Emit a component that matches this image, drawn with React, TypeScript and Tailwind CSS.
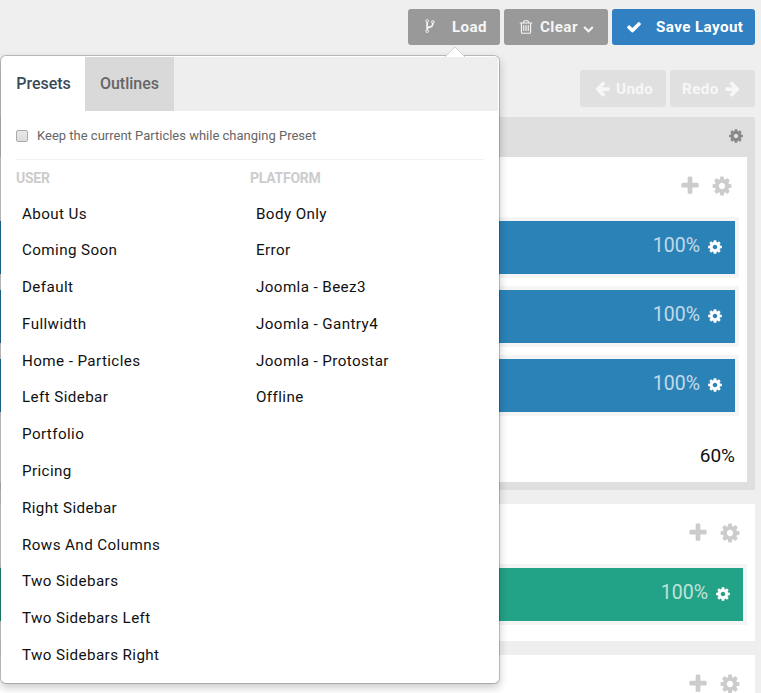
import type { ReactNode } from "react";

const ICONS = {
  cog: "M1152 896q0-106-75-181t-181-75-181 75-75 181 75 181 181 75 181-75 75-181zm512-109v222q0 12-8 23t-20 13l-185 28q-19 54-39 91 35 50 107 138 10 12 10 25t-9 23q-27 37-99 108t-94 71q-12 0-26-9l-138-108q-44 23-91 38-16 136-29 186-7 28-36 28h-222q-14 0-24.5-8.5t-11.5-21.5l-28-184q-49-16-90-37l-141 107q-10 9-25 9-14 0-25-11-126-114-165-168-7-10-7-23 0-12 8-23 15-21 51-66.5t54-70.5q-27-50-41-99l-183-27q-13-2-21-12.5t-8-23.5v-222q0-12 8-23t19-13l186-28q14-46 39-92-40-57-107-138-10-12-10-24 0-10 9-23 26-36 98.5-107.5t94.5-71.5q13 0 26 10l138 107q44-23 91-38 16-136 29-186 7-28 36-28h222q14 0 24.5 8.5t11.5 21.5l28 184q49 16 90 37l142-107q9-9 24-9 13 0 25 10 129 119 165 170 7 8 7 22 0 12-8 23-15 21-51 66.5t-54 70.5q26 50 41 98l183 28q13 2 21 12.5t8 23.5z",
  plus: "M1600 736v192q0 40-28 68t-68 28h-416v416q0 40-28 68t-68 28h-192q-40 0-68-28t-28-68v-416h-416q-40 0-68-28t-28-68v-192q0-40 28-68t68-28h416v-416q0-40 28-68t68-28h192q40 0 68 28t28 68v416h416q40 0 68 28t28 68z",
  check: "M1671 566q0 40-28 68l-724 724-136 136q-28 28-68 28t-68-28l-136-136-362-362q-28-28-28-68t28-68l136-136q28-28 68-28t68 28l294 295 656-657q28-28 68-28t68 28l136 136q28 28 28 68z",
  arrow: "M1664 896v128q0 53-32.5 90.5t-84.5 37.5h-704l293 294q38 36 38 90t-38 90l-75 76q-37 37-90 37-52 0-91-37l-651-652q-37-37-37-90 0-52 37-91l651-650q38-38 91-38 52 0 90 38l75 74q38 38 38 91t-38 91l-293 293h704q52 0 84.5 37.5t32.5 90.5z",
  trash: "M704 736v576q0 14-9 23t-23 9h-64q-14 0-23-9t-9-23v-576q0-14 9-23t23-9h64q14 0 23 9t9 23zm256 0v576q0 14-9 23t-23 9h-64q-14 0-23-9t-9-23v-576q0-14 9-23t23-9h64q14 0 23 9t9 23zm256 0v576q0 14-9 23t-23 9h-64q-14 0-23-9t-9-23v-576q0-14 9-23t23-9h64q14 0 23 9t9 23zm128 724v-948h-896v948q0 22 7 40.5t14.5 27 10.5 8.5h832q3 0 10.5-8.5t14.5-27 7-40.5zm-672-1076h448l-48-117q-7-9-17-11h-317q-10 2-17 11zm928 32v64q0 14-9 23t-23 9h-96v948q0 83-47 143.5t-113 60.5h-832q-66 0-113-58.5t-47-141.5v-952h-96q-14 0-23-9t-9-23v-64q0-14 9-23t23-9h309l70-167q15-37 54-63t79-26h320q40 0 79 26t54 63l70 167h309q14 0 23 9t9 23z",
  fork: "M672 1472q0-40-28-68t-68-28-68 28-28 68 28 68 68 28 68-28 28-68zm0-1152q0-40-28-68t-68-28-68 28-28 68 28 68 68 28 68-28 28-68zm640 128q0-40-28-68t-68-28-68 28-28 68 28 68 68 28 68-28 28-68zm96 0q0 52-26 96.5t-70 69.5q-2 287-226 414-67 38-203 81-128 40-169.5 71t-41.5 100v26q44 25 70 69.5t26 96.5q0 80-56 136t-136 56-136-56-56-136q0-52 26-96.5t70-69.5v-820q-44-25-70-69.5t-26-96.5q0-80 56-136t136-56 136 56 56 136q0 52-26 96.5t-70 69.5v497q54-26 154-57 55-17 87.5-29.5t70.5-31 59-39.5 40.5-51 28-69.5 8.5-91.5q-44-25-70-69.5t-26-96.5q0-80 56-136t136-56 136 56 56 136z",
  chevron: "M1683 808l-742 741q-19 19-45 19t-45-19l-742-741q-19-19-19-45.5t19-45.5l166-165q19-19 45-19t45 19l531 531 531-531q19-19 45-19t45 19l166 165q19 19 19 45.5t-19 45.5z",
};

function Icon({ name, className }: { name: keyof typeof ICONS; className: string }) {
  return (
    <svg viewBox="0 0 1792 1792" fill="currentColor" className={`shrink-0 ${className}`}>
      <path d={ICONS[name]} />
    </svg>
  );
}

const userPresets = [
  "About Us", "Coming Soon", "Default", "Fullwidth", "Home - Particles", "Left Sidebar", "Portfolio",
  "Pricing", "Right Sidebar", "Rows And Columns", "Two Sidebars", "Two Sidebars Left", "Two Sidebars Right",
];
const platformPresets = ["Body Only", "Error", "Joomla - Beez3", "Joomla - Gantry4", "Joomla - Protostar", "Offline"];

function SectionTools() {
  return (
    <div className="flex h-[60px] items-center justify-end gap-[10px] pr-[14px] pb-[2px] text-[#cccccc]">
      <Icon name="plus" className="size-[22px]" />
      <Icon name="cog" className="size-[22px]" />
    </div>
  );
}

function Block({ color }: { color: string }) {
  return (
    <div className="mr-2 border-4 border-l-0 border-[#f5f5f5]">
      <div className={`flex h-[53px] items-start justify-end pr-3 text-white ${color}`}>
        <span className="mt-[11px] text-[19.5px] leading-[28px] opacity-70">100%</span>
        <Icon name="cog" className="mt-[18px] ml-[7px] size-4" />
      </div>
    </div>
  );
}

function PresetList({ title, items }: { title: string; items: string[] }) {
  return (
    <div className="w-[234px]">
      <h2 className="h-[34.65px] pt-[8px] text-[14px] leading-[20px] font-bold tracking-[-0.25px] text-[#cccccc]">{title}</h2>
      <ul className="pl-[6px]">
        {items.map((item) => (
          <li key={item} className="h-[36.77px] text-[15.2px] leading-[38.4px] tracking-[0.4px] text-[#111111]">{item}</li>
        ))}
      </ul>
    </div>
  );
}

function Button({ className, children }: { className: string; children: ReactNode }) {
  return <button className={`flex items-center rounded-[3px] text-[15.2px] font-bold tracking-[0.4px] whitespace-nowrap ${className}`}>{children}</button>;
}

export default function App() {
  return (
    <div className="relative h-[693px] w-[761px] overflow-hidden bg-[#efefef] pr-[6px] font-[Roboto,sans-serif]">
      <div className="flex justify-end gap-1 pt-[9px]">
        <Button className="h-9 w-[92px] bg-[#999999] pl-[14px] text-[#f5f5f5]">
          <Icon name="fork" className="mr-[14px] mb-[2px] size-4" />Load
        </Button>
        <Button className="h-9 w-[104px] bg-[#999999] pl-[14px] text-[#f5f5f5]">
          <Icon name="trash" className="mr-[6px] mb-px size-4" />Clear
          <Icon name="chevron" className="mt-[2px] ml-[5px] size-[11px]" />
        </Button>
        <Button className="h-9 w-[143px] bg-[#3180c2] pl-[14px] text-white">
          <Icon name="check" className="mr-[14px] mb-px size-4" />Save Layout
        </Button>
      </div>

      <div className="mt-[25px] flex justify-end gap-1">
        <Button className="h-[37px] w-[86px] bg-[#e0e0e0] pt-px pl-[14px] text-[#f7f7f7]">
          <Icon name="arrow" className="mr-[5px] mb-px size-[17px]" />Undo
        </Button>
        <Button className="h-[37px] w-[85px] bg-[#e0e0e0] pt-px pl-3 text-[#f7f7f7]">
          Redo<Icon name="arrow" className="mb-px ml-[5px] size-[17px] -scale-x-100" />
        </Button>
      </div>

      <section className="mt-[10px] h-[373px] bg-[#dfdfdf] pr-2">
        <header className="flex h-10 items-center justify-end pr-[3px] pb-[2px] text-[#888888]">
          <Icon name="cog" className="size-4" />
        </header>
        <div className="h-[325px] bg-white">
          <SectionTools />
          <div className="flex flex-col gap-2">
            <Block color="bg-[#2a82b7]" />
            <Block color="bg-[#2a82b7]" />
            <Block color="bg-[#2a82b7]" />
          </div>
          <div className="mt-[26px] pr-3 text-right text-[19px] leading-[28px] text-[#111111]">60%</div>
        </div>
      </section>

      <section className="mt-[14px] h-[137px] bg-white">
        <SectionTools />
        <Block color="bg-[#22a286]" />
      </section>

      <section className="mt-[14px] bg-white">
        <SectionTools />
      </section>

      <div className="absolute top-[55px] left-0 h-[629px] w-[500px] rounded-[6px] border border-black/20 bg-white bg-clip-padding p-px shadow-[0_4px_8px_rgba(0,0,0,0.2)]">
        <svg viewBox="0 0 22 11" className="absolute -top-[10px] left-[443px] h-[11px] w-[22px]">
          <path d="M1 11 11 1 21 11" fill="white" stroke="#d0d0d0" strokeWidth="1" />
          <path d="M2 10.5h18" stroke="white" />
        </svg>
        <nav className="flex h-[54px] rounded-t bg-[#eeeeee] text-[16px] font-medium">
          <button className="w-[83px] rounded-tl bg-white text-[#3a4a58]">Presets</button>
          <button className="w-[89px] bg-[#d9d9d9] text-[#666666]">Outlines</button>
        </nav>
        <div className="px-[14px]">
          <label className="flex h-[49px] items-center border-b border-[#f1f1f1] pt-[2px] text-[13px] text-[#666666]">
            <span className="mr-[9px] size-3 rounded-[2px] border border-[#aaaaaa] bg-linear-to-b from-[#e8e8e8] to-[#dddddd]" />
            Keep the current Particles while changing Preset
          </label>
          <div className="flex">
            <PresetList title="USER" items={userPresets} />
            <PresetList title="PLATFORM" items={platformPresets} />
          </div>
        </div>
      </div>
    </div>
  );
}
